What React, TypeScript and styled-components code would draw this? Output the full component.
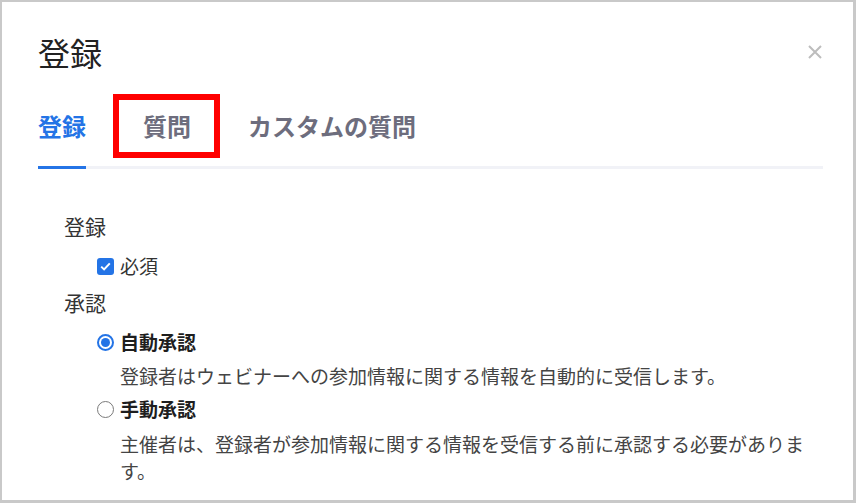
import React from 'react';
import styled, {createGlobalStyle} from 'styled-components';

const Global = createGlobalStyle`
  html, body {
    margin: 0;
    padding: 0;
    background: #fff;
  }
  body {
    font-family: 'Noto Sans CJK JP', 'Noto Sans', sans-serif;
  }
`;

const Frame = styled.div`
  position: relative;
  box-sizing: border-box;
  width: 856px;
  height: 503px;
  overflow: hidden;
  background: #fff;
  border-style: solid;
  border-color: #c9c9c9;
  border-width: 2px 3px 3px 2px;
  padding: 30px 30px 0 36px;
`;

const Header = styled.div`
  display: flex;
  align-items: center;
  justify-content: space-between;
  height: 40px;
`;

const Title = styled.h1`
  margin: 0;
  font-size: 32px;
  font-weight: 400;
  line-height: 40px;
  color: #222;
`;

const Close = styled.button`
  display: flex;
  align-items: center;
  justify-content: center;
  width: 14px;
  height: 14px;
  margin-right: 1px;
  padding: 0;
  border: 0;
  background: none;
  cursor: pointer;
`;

const TabList = styled.div`
  display: flex;
  gap: 57px;
  margin-top: 38px;
  border-bottom: 3px solid #f1f2f7;
`;

const Tab = styled.div<{active?: boolean}>`
  font-size: 24px;
  font-weight: 700;
  line-height: 32px;
  padding-bottom: 24px;
  margin-bottom: -3px;
  color: ${p => (p.active ? '#2474e6' : '#6d6d7d')};
  border-bottom: 3px solid ${p => (p.active ? '#2474e6' : 'transparent')};
`;

const Body = styled.div`
  padding: 42px 0 0 26px;
`;

const Label = styled.div<{gap?: number}>`
  margin-top: ${p => p.gap ?? 0}px;
  font-size: 21px;
  line-height: 30px;
  color: #333;
`;

const Option = styled.label<{gap?: number; bold?: boolean}>`
  display: flex;
  align-items: center;
  gap: 6px;
  margin-top: ${p => p.gap ?? 0}px;
  padding-left: 33px;
  font-size: 19px;
  line-height: 28px;
  font-weight: ${p => (p.bold ? 700 : 400)};
  color: ${p => (p.bold ? '#1e1e1e' : '#333')};
`;

const Box = styled.span`
  display: inline-flex;
  align-items: center;
  justify-content: center;
  width: 17px;
  height: 17px;
  border-radius: 3px;
  background: #2474e6;
`;

const Radio = styled.span<{checked?: boolean}>`
  box-sizing: border-box;
  display: inline-flex;
  align-items: center;
  justify-content: center;
  width: 17px;
  height: 17px;
  border-radius: 50%;
  border: ${p => (p.checked ? '2px solid #2474e6' : '1.5px solid #7a7a7a')};
  background: #fff;
  &::after {
    content: '';
    display: ${p => (p.checked ? 'block' : 'none')};
    width: 9px;
    height: 9px;
    border-radius: 50%;
    background: #2474e6;
  }
`;

const Desc = styled.div<{gap?: number}>`
  margin-top: ${p => p.gap ?? 0}px;
  padding-left: 56px;
  max-width: 690px;
  font-size: 19px;
  line-height: 27px;
  color: #444;
`;

// annotation drawn over the screenshot
const Highlight = styled.div`
  position: absolute;
  left: 111px;
  top: 92px;
  width: 107px;
  height: 64px;
  box-sizing: border-box;
  border: 6px solid #ff0000;
  pointer-events: none;
`;

export default function App() {
  return (
    <>
      <Global />
      <Frame>
        <Header>
          <Title>登録</Title>
          <Close aria-label="close">
            <svg width="14" height="14" viewBox="0 0 14 14">
              <path d="M1 1L13 13M13 1L1 13" stroke="#bdbdbd" strokeWidth="2" />
            </svg>
          </Close>
        </Header>
        <TabList>
          <Tab active>登録</Tab>
          <Tab>質問</Tab>
          <Tab>カスタムの質問</Tab>
        </TabList>
        <Body>
          <Label>登録</Label>
          <Option gap={11}>
            <Box>
              <svg width="11" height="9" viewBox="0 0 11 9">
                <path d="M1.2 4.6L4.1 7.4L9.8 1.4" fill="none" stroke="#fff" strokeWidth="2" />
              </svg>
            </Box>
            必須
          </Option>
          <Label gap={7}>承認</Label>
          <Option gap={11} bold>
            <Radio checked />
            自動承認
          </Option>
          <Desc gap={6}>登録者はウェビナーへの参加情報に関する情報を自動的に受信します。</Desc>
          <Option gap={6} bold>
            <Radio />
            手動承認
          </Option>
          <Desc gap={7}>主催者は、登録者が参加情報に関する情報を受信する前に承認する必要があります。</Desc>
        </Body>
        <Highlight />
      </Frame>
    </>
  );
}
